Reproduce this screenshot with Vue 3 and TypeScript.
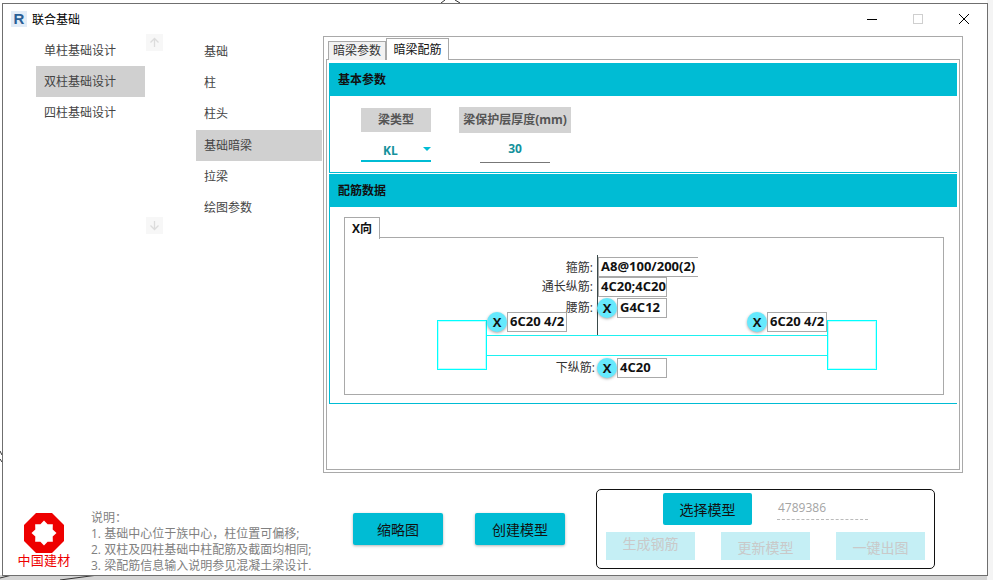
<script setup lang="ts">
import { ref } from "vue";

const designTypes = ["单柱基础设计", "双柱基础设计", "四柱基础设计"];
const parts = ["基础", "柱", "柱头", "基础暗梁", "拉梁", "绘图参数"];
const activeType = ref("双柱基础设计");
const activePart = ref("基础暗梁");
const notes = [
  "说明：",
  "1. 基础中心位于族中心，柱位置可偏移;",
  "2. 双柱及四柱基础中柱配筋及截面均相同;",
  "3. 梁配筋信息输入说明参见混凝土梁设计.",
];
</script>

<template>
  <div class="screen">
    <svg class="backdrop" width="993" height="580" viewBox="0 0 993 580">
      <path d="M441 3 L445 0 M455 0 L460 3 M0 451 L2 455 M0 459 L2 462 M60 580 L98 575 M0 578 L12 575" />
    </svg>
    <section class="window">
      <header class="title-bar">
        <span class="app-icon">R</span>
        <span class="title">联合基础</span>
        <div class="controls">
          <svg width="12" height="12" viewBox="0 0 12 12"><path d="M1 6.5H11" stroke="#000" /></svg>
          <svg width="12" height="12" viewBox="0 0 12 12"><rect x="1.5" y="1.5" width="9" height="9" fill="none" stroke="#cfcfcf" /></svg>
          <svg width="12" height="12" viewBox="0 0 12 12"><path d="M1 1L11 11M11 1L1 11" stroke="#000" /></svg>
        </div>
      </header>

      <div class="body-row">
        <ul class="type-list">
          <li v-for="item in designTypes" :key="item" :class="{ active: item === activeType }">{{ item }}</li>
        </ul>
        <div class="scroller">
          <button class="scroll-btn">
            <svg width="11" height="11" viewBox="0 0 11 11"><path d="M5.5 10V1.5M1.5 5.5L5.5 1.5L9.5 5.5" /></svg>
          </button>
          <button class="scroll-btn">
            <svg width="11" height="11" viewBox="0 0 11 11"><path d="M5.5 1V9.5M1.5 5.5L5.5 9.5L9.5 5.5" /></svg>
          </button>
        </div>
        <ul class="part-list">
          <li v-for="item in parts" :key="item" :class="{ active: item === activePart }">{{ item }}</li>
        </ul>

        <div class="main-panel">
          <div class="tabs">
            <span class="tab">暗梁参数</span>
            <span class="tab current">暗梁配筋</span>
          </div>
          <div class="tab-body">
            <section class="group basic">
              <h4 class="group-head">基本参数</h4>
              <div class="params">
                <div class="param type-param">
                  <span class="param-label">梁类型</span>
                  <div class="combo">
                    <span>KL</span>
                    <i class="caret"></i>
                  </div>
                </div>
                <div class="param cover-param">
                  <span class="param-label">梁保护层厚度(mm)</span>
                  <div class="number-field">30</div>
                </div>
              </div>
            </section>

            <section class="group rebar">
              <h4 class="group-head">配筋数据</h4>
              <div class="x-tabs">
                <span class="x-tab">X向</span>
              </div>
              <div class="x-box">
                <div class="canvas">
                  <i class="stem"></i>
                  <i class="column col-left"></i>
                  <i class="column col-right"></i>
                  <i class="beam"></i>

                  <span class="rebar-label l-stirrup">箍筋:</span>
                  <span class="rebar-label l-long">通长纵筋:</span>
                  <span class="rebar-label l-waist">腰筋:</span>
                  <span class="rebar-label l-lower">下纵筋:</span>

                  <span class="value v-stirrup">A8@100/200(2)</span>
                  <span class="value v-long">4C20;4C20</span>
                  <span class="x-dot d-waist">X</span>
                  <span class="value v-waist">G4C12</span>
                  <span class="x-dot d-left">X</span>
                  <span class="value v-left">6C20 4/2</span>
                  <span class="x-dot d-right">X</span>
                  <span class="value v-right">6C20 4/2</span>
                  <span class="x-dot d-lower">X</span>
                  <span class="value v-lower">4C20</span>
                </div>
              </div>
            </section>
          </div>
        </div>
      </div>

      <footer class="footer">
        <div class="logo">
          <svg width="40" height="40" viewBox="0 0 40 40">
            <polygon points="12,0 28,0 40,12 40,28 28,40 12,40 0,28 0,12" fill="#ee0000" />
            <polygon
              points="20,7.5 23.6,11.3 28.84,11.16 28.7,16.4 32.5,20 28.7,23.6 28.84,28.84 23.6,28.7 20,32.5 16.4,28.7 11.16,28.84 11.3,23.6 7.5,20 11.3,16.4 11.16,11.16 16.4,11.3"
              fill="#fff"
            />
          </svg>
          <span>中国建材</span>
        </div>
        <div class="notes">
          <div v-for="line in notes" :key="line">{{ line }}</div>
        </div>
        <button class="btn thumb-btn">缩略图</button>
        <button class="btn create-btn">创建模型</button>
        <div class="model-box">
          <div class="select-row">
            <button class="btn select-btn">选择模型</button>
            <span class="element-id">4789386</span>
          </div>
          <div class="action-row">
            <button class="btn-off first">生成钢筋</button>
            <button class="btn-off">更新模型</button>
            <button class="btn-off">一键出图</button>
          </div>
        </div>
      </footer>
    </section>
  </div>
</template>

<style>
body {
  margin: 0;
  background: #fff;
}
</style>

<style scoped>
.screen {
  position: relative;
  box-sizing: border-box;
  width: 993px;
  height: 580px;
  padding: 3px 5px 4px 2px;
  overflow: hidden;
  background: linear-gradient(#f4f4f4, #f4f4f4) right / 6px 100% no-repeat,
    linear-gradient(#d4d4d4, #d4d4d4) bottom / 100% 5px no-repeat, #fff;
  font-family: "Open Sans", "Noto Sans CJK SC", sans-serif;
  font-size: 12px;
  color: #333;
}

.backdrop {
  position: absolute;
  top: 0;
  left: 0;
}

.backdrop path {
  fill: none;
  stroke: #333;
}

.window {
  position: relative;
  box-sizing: border-box;
  height: 573px;
  background: #fff;
  border: 1px solid #6f6f6f;
  display: flex;
  flex-direction: column;
}

.title-bar {
  height: 32px;
  flex: none;
  display: flex;
  align-items: center;
  padding: 0 0 3px 8px;
  box-sizing: border-box;
}

.app-icon {
  width: 16px;
  height: 16px;
  background: #e2ecf7;
  color: #2a5f96;
  font: bold 15px/16px "Liberation Sans", sans-serif;
  text-align: center;
}

.title {
  margin-left: 5px;
  font-size: 12px;
  color: #000;
}

.controls {
  margin-left: auto;
  display: flex;
  gap: 34px;
  padding-right: 17px;
}

.body-row {
  height: 437px;
  flex: none;
  display: flex;
  align-items: flex-start;
}

ul {
  list-style: none;
  margin: 0;
  padding: 0;
}

li {
  height: 31.2px;
  line-height: 31px;
  padding-left: 8px;
  box-sizing: border-box;
  color: #444;
}

li.active {
  background: #d0d0d0;
}

.type-list {
  width: 109px;
  margin: -1px 0 0 33px;
}

.type-list li {
  line-height: 32px;
}

.scroller {
  width: 17px;
  height: 200px;
  margin: -2px 0 0 1px;
  display: flex;
  flex-direction: column;
  justify-content: space-between;
}

.scroll-btn {
  width: 17px;
  height: 17px;
  padding: 0;
  border: none;
  background: #f7f7f7;
  display: flex;
  align-items: center;
  justify-content: center;
}

.scroll-btn path {
  fill: none;
  stroke: #dcdcdc;
  stroke-width: 1.3;
}

.part-list {
  width: 126px;
  margin-left: 33px;
}

.main-panel {
  position: relative;
  box-sizing: border-box;
  width: 640px;
  height: 437px;
  margin-left: 1px;
  padding: 2px 2px 2px 2px;
  border: 1px solid #a9a9a9;
  display: flex;
  flex-direction: column;
}

.tabs {
  height: 21px;
  flex: none;
  display: flex;
  align-items: flex-end;
  padding-left: 2px;
  margin-bottom: -1px;
  z-index: 1;
}

.tab {
  box-sizing: border-box;
  width: 58px;
  height: 19px;
  border: 1px solid #a9a9a9;
  border-bottom: none;
  background: #f2f2f2;
  text-align: center;
  line-height: 18px;
  color: #333;
}

.tab.current {
  width: 63px;
  height: 22px;
  background: #fff;
  line-height: 21px;
  color: #111;
}

.tab-body {
  flex: 1;
  box-sizing: border-box;
  border: 1px solid #a9a9a9;
  padding: 3px 2px 0 2px;
}

.group {
  border-left: 1px solid #00bcd4;
  border-bottom: 1px solid #00bcd4;
  box-sizing: border-box;
  width: 628px;
}

.basic {
  height: 110px;
  margin-bottom: 1px;
}

.rebar {
  height: 230px;
}

.group-head {
  margin: 0;
  height: 33px;
  padding-left: 8px;
  background: #00bcd4;
  font-size: 12px;
  font-weight: 700;
  line-height: 33px;
  color: #111;
}

.params {
  display: flex;
  padding: 11px 0 0 31px;
}

.param {
  display: flex;
  flex-direction: column;
  align-items: center;
  color: #555;
  font-weight: 700;
}

.param-label {
  background: #d3d3d3;
  text-align: center;
}

.type-param {
  width: 70px;
  margin-top: 1px;
}

.type-param .param-label {
  width: 70px;
  height: 24px;
  line-height: 24px;
}

.combo {
  position: relative;
  box-sizing: border-box;
  width: 70px;
  height: 30px;
  padding: 8px 0 0 22px;
  border-bottom: 2px solid #00bcd4;
  color: #14919b;
  line-height: 22px;
}

.caret {
  position: absolute;
  right: 0;
  top: 15px;
  border-left: 4px solid transparent;
  border-right: 4px solid transparent;
  border-top: 4px solid #00bcd4;
}

.cover-param {
  width: 112px;
  margin-left: 28px;
}

.cover-param .param-label {
  width: 112px;
  height: 26px;
  line-height: 25px;
}

.number-field {
  box-sizing: border-box;
  width: 70px;
  height: 30px;
  padding-top: 3px;
  border-bottom: 1px solid #777;
  color: #14919b;
  text-align: center;
  line-height: 26px;
}

.x-tabs {
  height: 31px;
  padding: 10px 0 0 14px;
  box-sizing: border-box;
  margin-bottom: -1px;
  position: relative;
  z-index: 1;
}

.x-tab {
  display: block;
  box-sizing: border-box;
  width: 36px;
  height: 22px;
  border: 1px solid #a9a9a9;
  border-bottom: none;
  background: #fff;
  color: #111;
  font-weight: 700;
  text-align: center;
  line-height: 21px;
}

.x-box {
  box-sizing: border-box;
  width: 600px;
  height: 158px;
  margin: 0 0 0 14px;
  border: 1px solid #a9a9a9;
}

/* beam sketch, origin at 345,238 */
.canvas {
  position: relative;
  width: 598px;
  height: 156px;
}

.stem {
  position: absolute;
  left: 252px;
  top: 17px;
  width: 1px;
  height: 80px;
  background: #3a4a4a;
}

.column {
  position: absolute;
  top: 82px;
  box-sizing: border-box;
  width: 50px;
  height: 50px;
  border: 1px solid #00ffff;
  box-shadow: inset 0 0 0 1px rgba(0, 255, 255, 0.25);
}

.col-left {
  left: 92px;
}

.col-right {
  left: 482px;
}

.beam {
  position: absolute;
  left: 142px;
  top: 97px;
  width: 340px;
  height: 21px;
  box-sizing: border-box;
  border-top: 1px solid #1ef0f0;
  border-bottom: 1px solid #1ef0f0;
}

.rebar-label {
  position: absolute;
  right: 350px;
  line-height: 18px;
  color: #333;
  white-space: nowrap;
}

.l-stirrup {
  top: 21px;
}

.l-long {
  top: 40px;
}

.l-waist {
  top: 61px;
}

.l-lower {
  top: 121px;
  right: 348px;
}

.value {
  position: absolute;
  box-sizing: border-box;
  height: 20px;
  padding-left: 2px;
  border: 1px solid #a9a9a9;
  background: #fff;
  color: #111;
  font-size: 13px;
  font-weight: 700;
  line-height: 17px;
  white-space: nowrap;
}

.v-stirrup {
  left: 253px;
  top: 19px;
  width: 100px;
  border-right: none;
}

.v-long {
  left: 253px;
  top: 39px;
  width: 69px;
}

.v-waist {
  left: 272px;
  top: 60px;
  width: 50px;
}

.v-left {
  left: 162px;
  top: 74px;
  width: 60px;
}

.v-right {
  left: 422px;
  top: 74px;
  width: 60px;
}

.v-lower {
  left: 272px;
  top: 120px;
  width: 50px;
}

.x-dot {
  position: absolute;
  width: 20px;
  height: 20px;
  border-radius: 50%;
  background: #66e9fd;
  box-shadow: 0 1px 3px rgba(0, 0, 0, 0.35);
  color: #111;
  font-size: 13px;
  font-weight: 700;
  text-align: center;
  line-height: 20px;
}

.d-waist {
  left: 252px;
  top: 60px;
}

.d-left {
  left: 142px;
  top: 74px;
}

.d-right {
  left: 402px;
  top: 74px;
}

.d-lower {
  left: 252px;
  top: 120px;
}

.footer {
  flex: 1;
  display: flex;
  align-items: flex-start;
}

.logo {
  width: 54px;
  margin: 40px 0 0 14px;
  display: flex;
  flex-direction: column;
  align-items: center;
  color: #ee0000;
  font-size: 13px;
  line-height: 18px;
}

.logo span {
  margin-top: -2px;
  letter-spacing: 0.3px;
  white-space: nowrap;
}

.notes {
  width: 239px;
  margin: 37px 0 0 20px;
  color: #808080;
  font-size: 12px;
  line-height: 16px;
  white-space: nowrap;
}

.btn {
  box-sizing: border-box;
  border: none;
  border-radius: 2px;
  background: #00bcd4;
  color: #111;
  font: inherit;
  font-size: 14px;
  padding: 0;
}

.thumb-btn,
.create-btn {
  width: 90px;
  height: 32px;
  margin-top: 40px;
  box-shadow: 0 1px 3px rgba(0, 0, 0, 0.3);
}

.thumb-btn {
  margin-left: 23px;
}

.create-btn {
  margin-left: 32px;
}

.model-box {
  box-sizing: border-box;
  width: 339px;
  height: 80px;
  margin: 16px 0 0 31px;
  border: 1px solid #111;
  border-radius: 5px;
  padding: 3px 9px 0;
}

.select-row {
  display: flex;
  height: 32px;
  padding-left: 57px;
}

.select-btn {
  width: 89px;
  height: 32px;
}

.element-id {
  box-sizing: border-box;
  width: 91px;
  height: 27px;
  margin-left: 25px;
  padding-left: 1px;
  border-bottom: 1px dashed #bbb;
  color: #a4a4a4;
  line-height: 29px;
}

.action-row {
  display: flex;
  gap: 26px;
  margin-top: 7px;
}

.btn-off {
  width: 89px;
  height: 28px;
  padding: 4px 0 0;
  border: none;
  background: #c5eff5;
  color: #c9c9c9;
  font: inherit;
  font-size: 14px;
  line-height: 24px;
}

.btn-off.first {
  padding: 0 0 4px;
}
</style>
